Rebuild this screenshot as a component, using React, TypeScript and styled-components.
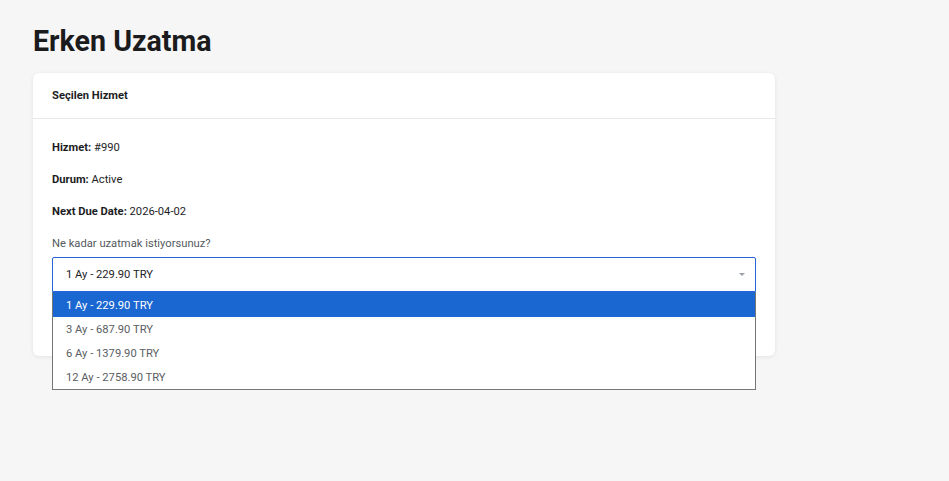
import styled, { createGlobalStyle } from 'styled-components';

const GlobalStyle = createGlobalStyle`
  body {
    margin: 0;
    background: #f6f6f6;
    font-family: Roboto, "Liberation Sans", sans-serif;
    color: #1d1d1f;
  }
`;

const Page = styled.div`
  min-height: 481px;
  padding: 22px 33px;
  box-sizing: border-box;
`;

const Title = styled.h1`
  margin: 1px 0 14px;
  font-size: 28.6px;
  line-height: 36px;
  font-weight: 700;
  color: #1b1b1d;
`;

const Card = styled.div`
  width: 742px;
  background: #fff;
  border-radius: 6px;
  box-shadow: 0 1px 4px rgba(0, 0, 0, 0.08);
`;

const CardHeader = styled.div`
  padding: 0 19px;
  height: 45px;
  display: flex;
  align-items: center;
  font-size: 11.2px;
  font-weight: 700;
  border-bottom: 1px solid #e8e8e8;
`;

const CardBody = styled.div`
  padding: 21px 19px 64px;
  display: flex;
  flex-direction: column;
`;

const Row = styled.p`
  margin: 0 0 16px;
  font-size: 11.2px;
  line-height: 16px;
  b {
    font-weight: 700;
  }
`;

const Label = styled.div`
  font-size: 11.2px;
  line-height: 16px;
  color: #555a60;
  margin-bottom: 5px;
`;

const SelectWrap = styled.div`
  position: relative;
`;

const SelectBox = styled.div`
  height: 35px;
  border: 1px solid #2563d9;
  border-radius: 2px 2px 0 0;
  box-sizing: border-box;
  display: flex;
  align-items: center;
  justify-content: space-between;
  padding: 0 10px 0 13px;
  font-size: 11.2px;
`;

const Caret = styled.span`
  width: 0;
  height: 0;
  border-left: 3px solid transparent;
  border-right: 3px solid transparent;
  border-top: 3px solid #9aa0a6;
`;

const OptionList = styled.ul`
  position: absolute;
  left: 0;
  right: 0;
  top: 35px;
  margin: 0;
  padding: 0;
  list-style: none;
  background: #fff;
  border: 1px solid #767676;
  border-top: none;
`;

const Option = styled.li<{ $active?: boolean }>`
  height: 24px;
  display: flex;
  align-items: center;
  padding: 0 13px;
  font-size: 11.2px;
  background: ${(p) => (p.$active ? '#1a67d2' : '#fff')};
  color: ${(p) => (p.$active ? '#fff' : '#5a5d62')};
  &:first-child {
    height: 25px;
    padding-top: 1px;
    box-sizing: border-box;
  }
`;

const options = [
  '1 Ay - 229.90 TRY',
  '3 Ay - 687.90 TRY',
  '6 Ay - 1379.90 TRY',
  '12 Ay - 2758.90 TRY',
];

export default function App() {
  return (
    <Page>
      <GlobalStyle />
      <Title>Erken Uzatma</Title>
      <Card>
        <CardHeader>Seçilen Hizmet</CardHeader>
        <CardBody>
          <Row>
            <b>Hizmet:</b> #990
          </Row>
          <Row>
            <b>Durum:</b> Active
          </Row>
          <Row>
            <b>Next Due Date:</b> 2026-04-02
          </Row>
          <Label>Ne kadar uzatmak istiyorsunuz?</Label>
          <SelectWrap>
            <SelectBox>
              <span>{options[0]}</span>
              <Caret />
            </SelectBox>
            <OptionList>
              {options.map((o, i) => (
                <Option key={o} $active={i === 0}>
                  {o}
                </Option>
              ))}
            </OptionList>
          </SelectWrap>
        </CardBody>
      </Card>
    </Page>
  );
}
